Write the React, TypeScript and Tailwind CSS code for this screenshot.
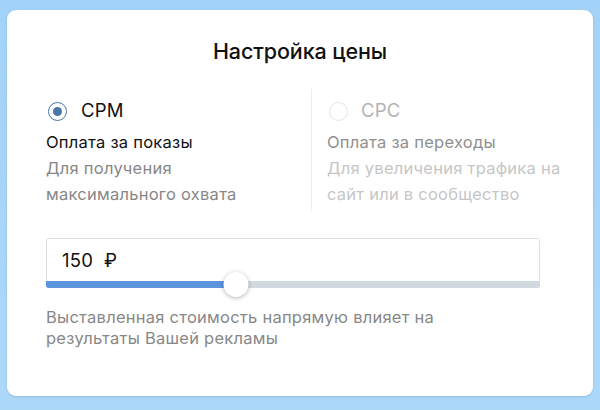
import React, { useState } from 'react';

const font = { fontFamily: '"Inter", "Noto Sans", sans-serif' };

function Radio({ checked, disabled }: { checked?: boolean; disabled?: boolean }) {
  return (
    <span
      className={`w-[19px] h-[19px] rounded-full border-[1.5px] flex items-center justify-center shrink-0 ${
        checked ? 'border-[#4a76a8]' : disabled ? 'border-[#e3e4e6]' : 'border-[#b8c1cc]'
      }`}
    >
      {checked && <span className="w-[9px] h-[9px] rounded-full bg-[#4a76a8]" />}
    </span>
  );
}

export default function App() {
  const [mode, setMode] = useState<'cpm' | 'cpc'>('cpm');
  const price = 150;
  const fill = 38.5; // percent of slider range

  return (
    <div
      className="w-[600px] h-[410px] bg-gradient-to-b from-[#a3d2f8] to-[#acd8fa] pt-[10px] px-[7px] pb-[14px] text-[#222]"
      style={font}
    >
      <div className="h-full bg-white rounded-[9px] shadow-sm px-[39px] pt-[28px]">
        <h1 className="text-center text-[21.5px] font-medium tracking-[-0.1px] text-[#111] leading-[26px]">
          Настройка цены
        </h1>

        <div className="flex mt-[35px] tracking-[0.25px] whitespace-nowrap">
          {/* CPM */}
          <div className="w-[265px] shrink-0 cursor-pointer" onClick={() => setMode('cpm')}>
            <div className="flex items-center gap-[14px] pl-[2px] h-[24px]">
              <Radio checked={mode === 'cpm'} />
              <span className="text-[18.5px] text-[#111]">CPM</span>
            </div>
            <div className="mt-[6px] text-[16.5px] leading-[26px] text-[#111]">Оплата за показы</div>
            <div className="text-[16.5px] leading-[26px] text-[#878787]">
              Для получения
              <br />
              максимального охвата
            </div>
          </div>

          {/* CPC */}
          <div className="shrink-0 border-l border-[#ececec] pl-[15px] pb-[4px] mt-[-10px] pt-[10px] cursor-pointer" onClick={() => setMode('cpc')}>
            <div className="flex items-center gap-[13px] pl-[2px] h-[24px]">
              <Radio checked={mode === 'cpc'} disabled />
              <span className="text-[18.5px] text-[#b3b3b3]">CPC</span>
            </div>
            <div className="mt-[6px] text-[16.5px] leading-[26px] text-[#8f8f8f]">Оплата за переходы</div>
            <div className="text-[16.5px] leading-[26px] text-[#c6c6c6]">
              Для увеличения трафика на
              <br />
              сайт или в сообщество
            </div>
          </div>
        </div>

        {/* price input with slider */}
        <div className="relative mt-[27px] w-[494px] h-[50px] border border-[#dcdee2] rounded-[3px]">
          <div className="h-[43px] flex items-center pl-[15px] text-[18.5px] tracking-[0.25px] text-[#111]">
            {price}&nbsp;&nbsp;₽
          </div>
          <div className="absolute left-[-1px] right-[-1px] bottom-[-1px] h-[7px] bg-[#d3d9e1] rounded-b-[3px] overflow-hidden">
            <div className="h-full bg-[#5b93dc]" style={{ width: `${fill}%` }} />
          </div>
          <div
            className="absolute bottom-[-10px] w-[25px] h-[25px] rounded-full bg-white shadow-[0_1px_4px_rgba(0,0,0,0.3)] -translate-x-1/2"
            style={{ left: `${fill}%` }}
          />
        </div>

        <p className="mt-[19px] text-[16.5px] leading-[21px] tracking-[0.25px] text-[#878787] w-[440px]">
          Выставленная стоимость напрямую влияет на результаты Вашей рекламы
        </p>
      </div>
    </div>
  );
}
